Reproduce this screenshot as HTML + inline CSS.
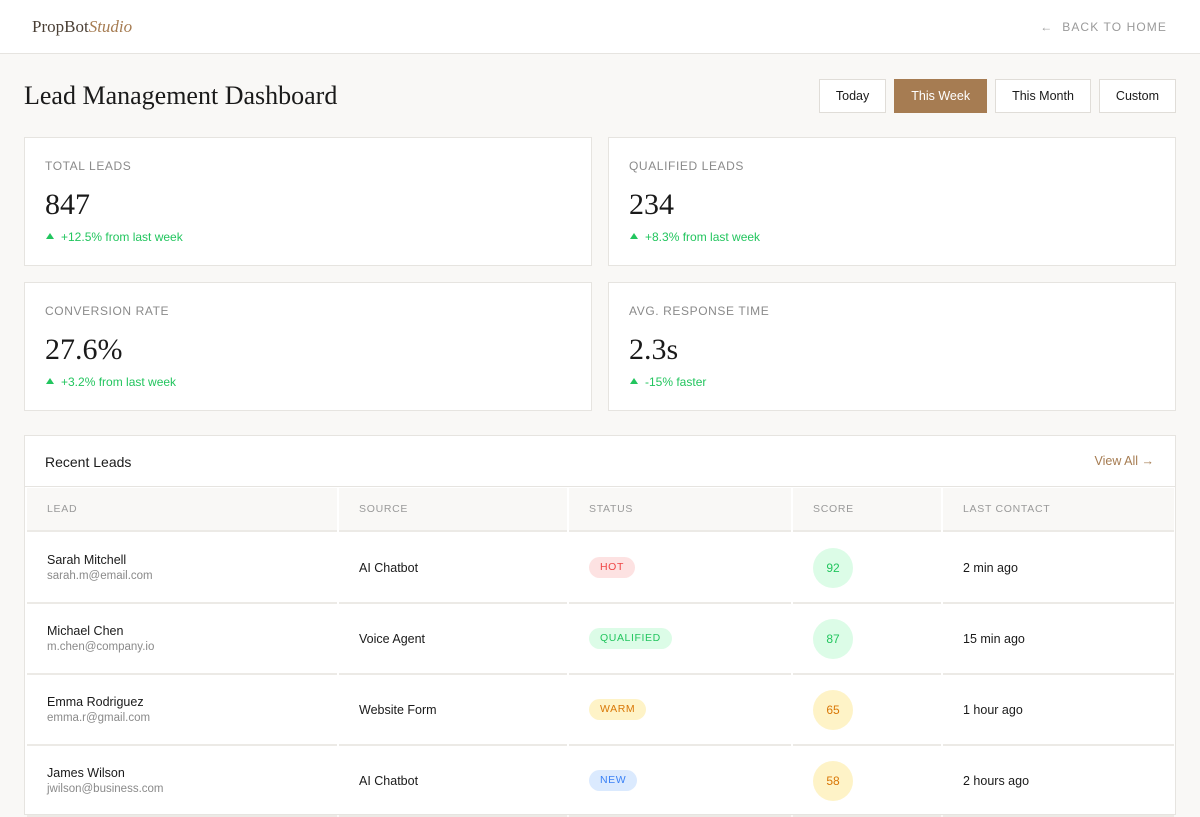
<!DOCTYPE html>
<html><head><meta charset="utf-8"><style>
*{box-sizing:border-box;margin:0;padding:0}
body{width:1200px;height:800px;overflow:hidden;background:#f9f8f6;font-family:"Liberation Sans",sans-serif;color:#1a1a1a}
.hdr{height:54px;background:#fff;border-bottom:1px solid #e6e4e0;position:relative}
.logo{position:absolute;left:32px;top:17px;font-family:"Liberation Serif",serif;font-size:17px;color:#4a3f35}
.logo i{color:#a67c52}
.back{position:absolute;right:33px;top:20px;font-size:12px;letter-spacing:1.1px;color:#9a9a9a}
h1{position:absolute;left:24px;top:81px;font-family:"Liberation Serif",serif;font-weight:normal;font-size:26px;color:#1a1a1a}
.btns{position:absolute;top:79px;right:24px;display:flex;gap:8px}
.btns div{height:34px;border:1px solid #e0ddd8;background:#fff;font-size:12.5px;line-height:32px;padding:0 16px}
.btns .on{background:#a67c52;color:#fff;border-color:#a67c52}
.card{position:absolute;width:568px;height:129px;background:#fff;border:1px solid #e6e4e0}
.card .l{position:absolute;left:20px;top:21px;font-size:12px;letter-spacing:.6px;color:#8a8a8a}
.card .v{position:absolute;left:20px;top:50px;font-family:"Liberation Serif",serif;font-size:30px;color:#1a1a1a}
.card .c{position:absolute;left:21px;top:92px;font-size:12px;color:#22c55e}
.card .c:before{content:"";display:inline-block;border-left:4px solid transparent;border-right:4px solid transparent;border-bottom:6px solid #22c55e;margin-right:7px;vertical-align:2px}
.tbl{position:absolute;left:24px;top:435px;width:1152px;height:380px;background:#fff;border:1px solid #e6e4e0}
.tbl .t{position:absolute;left:20px;top:18px;font-size:14px}
.tbl .va{position:absolute;right:21px;top:18px;font-size:12.5px;color:#a67c52}
.row{position:absolute;left:1px;height:71px}
.cell{position:absolute;top:0;height:100%;border-bottom:2px solid #eceae6;font-size:12.5px;padding-left:20px;display:flex;flex-direction:column;justify-content:center}
.hd .cell{background:#f9f8f6;font-size:10.5px;letter-spacing:.7px;color:#9a9a9a;height:44px}
.sub{font-size:11.5px;color:#8a8a8a;margin-top:3px}
.pill{display:inline-block;align-self:flex-start;height:21px;line-height:21px;padding:0 11px;border-radius:11px;font-size:10.5px;letter-spacing:.6px}
.sc{width:40px;height:40px;border-radius:50%;text-align:center;line-height:40px;font-size:12px}
</style></head><body>
<div class="hdr"><div class="logo">PropBot<i>Studio</i></div><div class="back">← &nbsp;BACK TO HOME</div></div>
<h1>Lead Management Dashboard</h1>
<div class="btns"><div>Today</div><div class="on">This Week</div><div>This Month</div><div>Custom</div></div>
<div class="card" style="left:24px;top:137px"><div class="l">TOTAL LEADS</div><div class="v">847</div><div class="c">+12.5% from last week</div></div>
<div class="card" style="left:608px;top:137px"><div class="l">QUALIFIED LEADS</div><div class="v">234</div><div class="c">+8.3% from last week</div></div>
<div class="card" style="left:24px;top:282px"><div class="l">CONVERSION RATE</div><div class="v">27.6%</div><div class="c">+3.2% from last week</div></div>
<div class="card" style="left:608px;top:282px"><div class="l">AVG. RESPONSE TIME</div><div class="v">2.3s</div><div class="c">-15% faster</div></div>
<div class="tbl"><div class="t">Recent Leads</div><div class="va">View All →</div>
<div style="position:absolute;left:0;right:0;top:50px;border-top:1px solid #e6e4e0"></div>
<div class="row hd" style="top:52px"><div class="cell" style="left:1px;width:310px">LEAD</div><div class="cell" style="left:313px;width:228px">SOURCE</div><div class="cell" style="left:543px;width:222px">STATUS</div><div class="cell" style="left:767px;width:148px">SCORE</div><div class="cell" style="left:917px;width:231px">LAST CONTACT</div></div>
<div class="row" style="top:97px"><div class="cell" style="left:1px;width:310px">Sarah Mitchell<div class="sub">sarah.m@email.com</div></div><div class="cell" style="left:313px;width:228px">AI Chatbot</div><div class="cell" style="left:543px;width:222px"><span class="pill" style="background:#fde2e2;color:#ef4444">HOT</span></div><div class="cell" style="left:767px;width:148px"><div class="sc" style="background:#dcfce7;color:#22c55e">92</div></div><div class="cell" style="left:917px;width:231px">2 min ago</div></div>
<div class="row" style="top:168px"><div class="cell" style="left:1px;width:310px">Michael Chen<div class="sub">m.chen@company.io</div></div><div class="cell" style="left:313px;width:228px">Voice Agent</div><div class="cell" style="left:543px;width:222px"><span class="pill" style="background:#dcfce7;color:#22c55e">QUALIFIED</span></div><div class="cell" style="left:767px;width:148px"><div class="sc" style="background:#dcfce7;color:#22c55e">87</div></div><div class="cell" style="left:917px;width:231px">15 min ago</div></div>
<div class="row" style="top:239px"><div class="cell" style="left:1px;width:310px">Emma Rodriguez<div class="sub">emma.r@gmail.com</div></div><div class="cell" style="left:313px;width:228px">Website Form</div><div class="cell" style="left:543px;width:222px"><span class="pill" style="background:#fef3c7;color:#d97706">WARM</span></div><div class="cell" style="left:767px;width:148px"><div class="sc" style="background:#fef3c7;color:#d97706">65</div></div><div class="cell" style="left:917px;width:231px">1 hour ago</div></div>
<div class="row" style="top:310px"><div class="cell" style="left:1px;width:310px">James Wilson<div class="sub">jwilson@business.com</div></div><div class="cell" style="left:313px;width:228px">AI Chatbot</div><div class="cell" style="left:543px;width:222px"><span class="pill" style="background:#dbeafe;color:#3b82f6">NEW</span></div><div class="cell" style="left:767px;width:148px"><div class="sc" style="background:#fef3c7;color:#d97706">58</div></div><div class="cell" style="left:917px;width:231px">2 hours ago</div></div>
</div>
</body></html>
